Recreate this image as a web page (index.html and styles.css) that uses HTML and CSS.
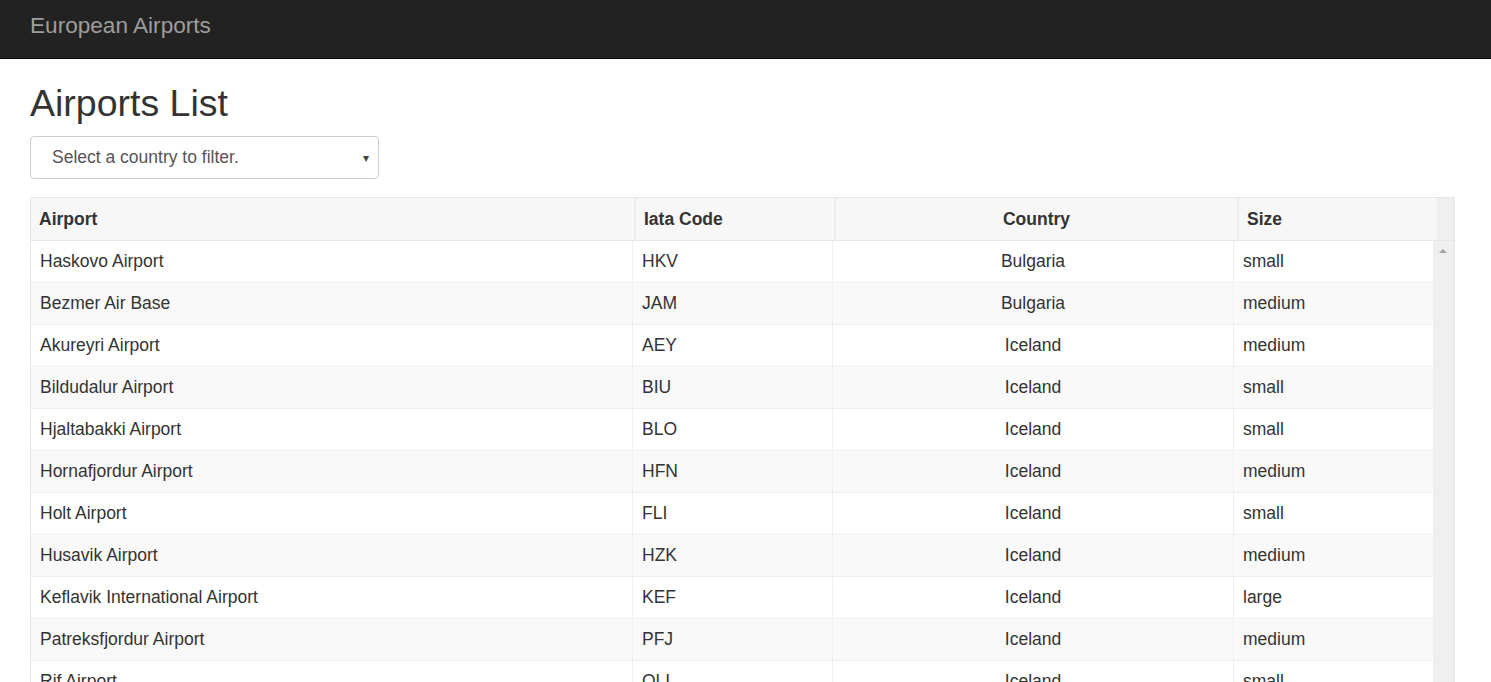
FILE: index.html
```html
<!DOCTYPE html>
<html>
<head>
<meta charset="utf-8">
<link rel="stylesheet" href="styles.css">
</head>
<body>
<nav class="navbar"><span class="brand">European Airports</span></nav>
<main class="page">
  <h1 class="title">Airports List</h1>
  <div class="select"><span class="select-text">Select a country to filter.</span><span class="select-arrow">▾</span></div>
  <div class="grid">
    <div class="head">
      <div class="hc">Airport</div>
      <div class="hc">Iata Code</div>
      <div class="hc center">Country</div>
      <div class="hc">Size</div>
      <div class="filler"></div>
    </div>
    <div class="bodywrap">
      <div class="rows">
        <div class="row"><div class="c">Haskovo Airport</div><div class="c">HKV</div><div class="c center">Bulgaria</div><div class="c">small</div></div>
        <div class="row"><div class="c">Bezmer Air Base</div><div class="c">JAM</div><div class="c center">Bulgaria</div><div class="c">medium</div></div>
        <div class="row"><div class="c">Akureyri Airport</div><div class="c">AEY</div><div class="c center">Iceland</div><div class="c">medium</div></div>
        <div class="row"><div class="c">Bildudalur Airport</div><div class="c">BIU</div><div class="c center">Iceland</div><div class="c">small</div></div>
        <div class="row"><div class="c">Hjaltabakki Airport</div><div class="c">BLO</div><div class="c center">Iceland</div><div class="c">small</div></div>
        <div class="row"><div class="c">Hornafjordur Airport</div><div class="c">HFN</div><div class="c center">Iceland</div><div class="c">medium</div></div>
        <div class="row"><div class="c">Holt Airport</div><div class="c">FLI</div><div class="c center">Iceland</div><div class="c">small</div></div>
        <div class="row"><div class="c">Husavik Airport</div><div class="c">HZK</div><div class="c center">Iceland</div><div class="c">medium</div></div>
        <div class="row"><div class="c">Keflavik International Airport</div><div class="c">KEF</div><div class="c center">Iceland</div><div class="c">large</div></div>
        <div class="row"><div class="c">Patreksfjordur Airport</div><div class="c">PFJ</div><div class="c center">Iceland</div><div class="c">medium</div></div>
        <div class="row"><div class="c">Rif Airport</div><div class="c">OLI</div><div class="c center">Iceland</div><div class="c">small</div></div>
      </div>
      <div class="scrollbar"><span class="arrow-up"></span></div>
    </div>
  </div>
</main>
</body>
</html>
```
FILE: styles.css
```css
html, body {
  margin: 0;
  padding: 0;
  background: #fff;
  font-family: "Liberation Sans", Arial, sans-serif;
  color: #333;
}
.navbar {
  height: 59px;
  background: #222;
  border-bottom: 1px solid #080808;
  box-sizing: border-box;
  display: flex;
  align-items: center;
  padding-left: 30px;
}
.brand {
  color: #9d9d9d;
  font-size: 22.6px;
  line-height: 1;
  margin-top: -6px;
}
.page {
  padding: 0 30px;
}
.title {
  font-size: 37.5px;
  font-weight: 500;
  line-height: 1.1;
  margin: 24px 0 0;
  color: #333;
}
.select {
  margin-top: 12px;
  width: 349px;
  height: 43px;
  box-sizing: border-box;
  border: 1px solid #ccc;
  border-radius: 4px;
  display: flex;
  align-items: center;
  justify-content: space-between;
  padding: 0 9px 0 21px;
  color: #555;
  font-size: 17.5px;
}
.select-arrow {
  font-size: 12px;
  color: #444;
}
.grid {
  margin-top: 18px;
  border: 1px solid #e6e6e6;
  width: 1425px;
  box-sizing: border-box;
}
.head {
  display: grid;
  grid-template-columns: 603px 200px 403px 200px 17px;
  height: 43px;
  background: #f7f7f7;
  border-bottom: 1px solid #e6e6e6;
  box-sizing: border-box;
}
.hc {
  font-weight: bold;
  font-size: 17.5px;
  display: flex;
  align-items: center;
  padding-left: 8px;
  border-left: 2px solid #ececec;
}
.hc:first-child {
  border-left: none;
}
.hc.center {
  justify-content: center;
  padding-left: 0;
}
.filler {
  background: #efefef;
}
.bodywrap {
  display: flex;
}
.rows {
  flex: 0 0 1402px;
}
.row {
  display: grid;
  grid-template-columns: 601px 200px 401px 200px;
  height: 42px;
  border-bottom: 1px solid #efefef;
  box-sizing: border-box;
}
.row:nth-child(even) {
  background: #f9f9f9;
}
.c {
  display: flex;
  align-items: center;
  font-size: 17.5px;
  padding-left: 9px;
  border-left: 1px solid #efefef;
}
.c:first-child {
  border-left: none;
}
.c.center {
  justify-content: center;
  padding-left: 0;
}
.scrollbar {
  flex: 0 0 21px;
  background: #efefef;
  position: relative;
}
.arrow-up {
  position: absolute;
  left: 6px;
  top: 8px;
  width: 0;
  height: 0;
  border-left: 4px solid transparent;
  border-right: 4px solid transparent;
  border-bottom: 4px solid #a3a3a3;
}
```
